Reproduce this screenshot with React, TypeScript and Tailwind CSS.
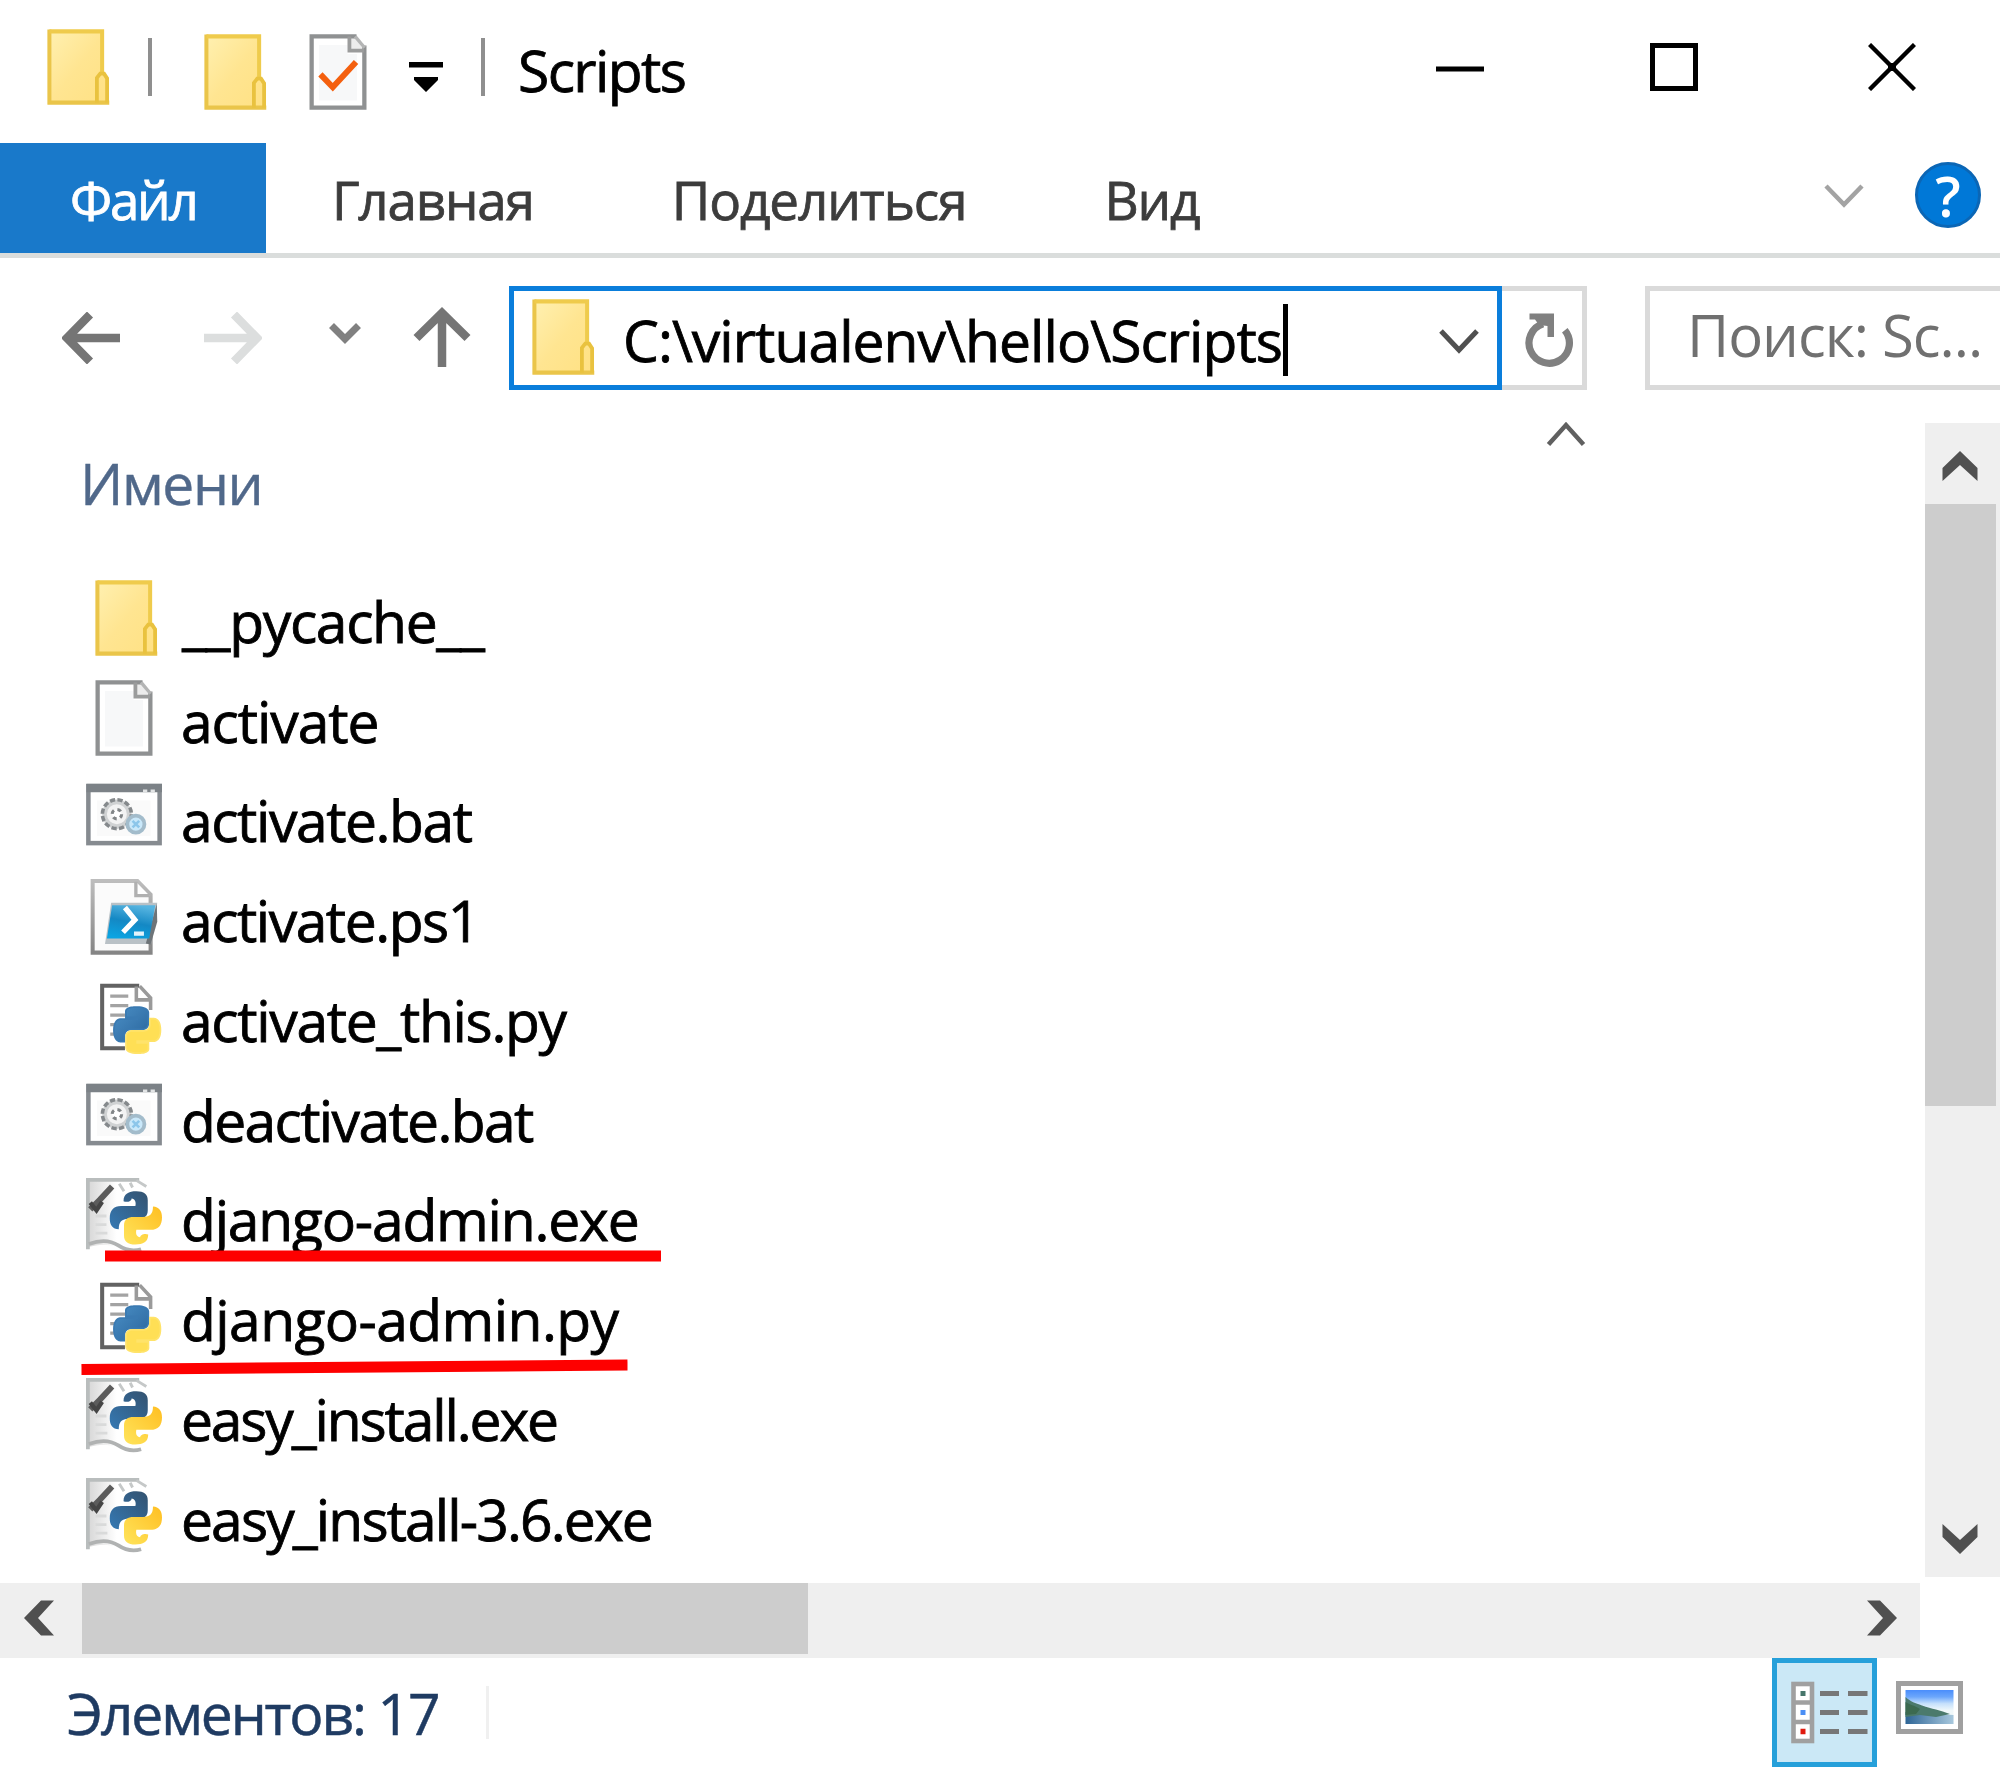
import type { ReactNode } from "react";

function FolderIcon() {
  return (
    <svg viewBox="0 0 16 16" className="size-[76px] shrink-0">
      <defs>
        <linearGradient id="folder" x1="0" y1="0" x2="1" y2="1">
          <stop offset="0" stopColor="#fff0b0" />
          <stop offset="0.5" stopColor="#ffe591" />
          <stop offset="1" stopColor="#ffe184" />
        </linearGradient>
      </defs>
      <path d="M2.4 0.5H13.5V9.3L14.5 10.4V15.5H2.4Z" fill="url(#folder)" />
      <path d="M2.4 0.1V15.9M2 15.5H15" stroke="#eac54a" strokeWidth="0.85" fill="none" />
      <path d="M2.4 0.5H13.5V9.3" stroke="#efcb4c" strokeWidth="0.85" fill="none" />
      <path d="M12.4 15.5V10.3L13.1 9.4H13.9L14.55 10.4V15.5" stroke="#e9c23f" strokeWidth="0.8" fill="none" />
    </svg>
  );
}

function PageIcon({ check = false }: { check?: boolean }) {
  return (
    <svg viewBox="0 0 16 16" className="size-[76px] shrink-0">
      <path d="M2.45 0.5H11.6L13.55 2.8V15.5H2.45Z" fill="#fff" />
      <path d="M4 2.3H10V4.2H12V14H4Z" fill="#f7f8f9" />
      <path d="M10.4 0.5V3.5H13.5L11.6 0.7Z" fill="#ececec" />
      <path d="M11.9 0.5H2.45V15.5H13.55V2.4" fill="none" stroke="#8f9192" strokeWidth="0.9" />
      <path d="M10.4 0.5V3.5H13.5" fill="none" stroke="#9b9c9c" strokeWidth="0.8" />
      <path d="M11.6 0.5L13.6 2.9" fill="none" stroke="#b4b5b5" strokeWidth="0.7" />
      {check && <path d="M4.3 8.5L6.9 11.2L11.8 5.9" fill="none" stroke="#f4600f" strokeWidth="1.25" />}
    </svg>
  );
}

function BatchIcon() {
  return (
    <svg viewBox="0 0 16 16" className="size-[76px] shrink-0">
      <rect x="0.5" y="1.5" width="15" height="12" fill="#fff" stroke="#868b90" strokeWidth="0.95" />
      <path d="M0.1 1.9H16" stroke="#7c8287" strokeWidth="1.8" />
      <path d="M12 2.5H12.9M13.6 2.5H14.5" stroke="#e2e4e5" strokeWidth="0.6" />
      <path d="M2.3 4.5H13.6V12H2.3Z" fill="#fafafa" />
      <circle cx="6.5" cy="7.4" r="2.6" fill="#f3f3f3" stroke="#d0d2d3" strokeWidth="1" />
      <circle cx="6.5" cy="7.4" r="3.05" fill="none" stroke="#85898c" strokeWidth="0.75" strokeDasharray="1.1 0.5" />
      <circle cx="6.5" cy="7.4" r="1" fill="#fff" stroke="#808486" strokeWidth="0.65" strokeDasharray="0.8 0.77" />
      <circle cx="10.5" cy="9.5" r="1.8" fill="#c9e8fa" stroke="#a3bccb" strokeWidth="0.8" />
      <path d="M9.8 10.2L11.2 8.8M9.8 8.8L11.2 10.2" stroke="#8cc6ea" strokeWidth="0.55" />
    </svg>
  );
}

function PowerShellIcon() {
  return (
    <svg viewBox="0 0 16 16" className="size-[76px] shrink-0">
      <defs>
        <linearGradient id="ps" x1="0.6" y1="0" x2="0.3" y2="1">
          <stop offset="0" stopColor="#56b4e0" />
          <stop offset="0.5" stopColor="#1488c4" />
          <stop offset="1" stopColor="#0ba4e2" />
        </linearGradient>
        <linearGradient id="psPage" x1="0" y1="0" x2="0" y2="1">
          <stop offset="0" stopColor="#bdbdbd" />
          <stop offset="1" stopColor="#858585" />
        </linearGradient>
      </defs>
      <path d="M1.4 0.4H10.8L13.6 3.3V15.5H1.4Z" fill="#fbfbfb" stroke="url(#psPage)" strokeWidth="0.85" />
      <path d="M10.5 0.6V3.5H13.4" fill="#fff" stroke="#b0b0b0" strokeWidth="0.7" />
      <path d="M5.3 5H15L13.7 13.7H4Z" fill="#b9c1c6" />
      <path d="M14.9 5.2L15 9L13.6 13.8L12.6 13.6Z" fill="#6e7478" />
      <path d="M5.5 5.5H14.6L13.3 12.5H4.4Z" fill="url(#ps)" />
      <path d="M8.2 6L10.3 8.6L7.8 11.2" fill="none" stroke="#fff" strokeWidth="1.1" />
      <path d="M10.1 11.5H12.2" stroke="#e2f3fb" strokeWidth="0.9" />
    </svg>
  );
}

function PythonFileIcon() {
  return (
    <svg viewBox="0 0 16 16" className="size-[76px] shrink-0">
      <defs>
        <linearGradient id="pyb" x1="0" y1="0" x2="1" y2="1">
          <stop offset="0" stopColor="#4a8fc6" />
          <stop offset="1" stopColor="#2a659c" />
        </linearGradient>
      </defs>
      <path d="M3.4 1.4H11L13.6 4.2V14.6H3.4Z" fill="#fff" />
      <path d="M8.2 14.6H3.4V1.4H11.2" fill="none" stroke="#626262" strokeWidth="0.85" />
      <path d="M10.6 1.6V4.4H13.4M11.3 1.5L13.6 4V6.5" fill="none" stroke="#9a9a9a" strokeWidth="0.75" />
      <path d="M5.1 3.6H8.9M5.1 5.6H8.9M5.1 7.6H8.5M5.1 9.6H7M5.1 11.6H6.5" stroke="#a3a3a3" strokeWidth="0.65" />
      <g transform="translate(5.9 5.9) scale(0.405)">
        <path
          fill="url(#pyb)"
          stroke="#3a7ab2"
          strokeWidth="0.9"
          d="M14.25.18l.9.2.73.26.59.3.45.32.34.34.25.34.16.33.1.3.04.26.02.2-.01.13V8.5l-.05.63-.13.55-.21.46-.26.38-.3.31-.33.25-.35.19-.35.14-.33.1-.3.07-.26.04-.21.02H8.77l-.69.05-.59.14-.5.22-.41.27-.33.32-.27.35-.2.36-.15.37-.1.35-.07.32-.04.27-.02.21v3.06H3.17l-.21-.03-.28-.07-.32-.12-.35-.18-.36-.26-.36-.36-.35-.46-.32-.59-.28-.73-.21-.88-.14-1.05-.05-1.23.06-1.22.16-1.04.24-.87.32-.71.36-.57.4-.44.42-.33.42-.24.4-.16.36-.1.32-.05.24-.01h.16l.06.01h8.16v-.83H6.18l-.01-2.75-.02-.37.05-.34.11-.31.17-.28.25-.26.31-.23.38-.2.44-.18.51-.15.58-.12.64-.1.71-.06.77-.04.84-.02 1.27.05z"
        />
        <path
          fill="#ffdf55"
          stroke="#ffe36a"
          strokeWidth="0.9"
          d="M21.1 6.11l.28.06.32.12.35.18.36.27.36.35.35.47.32.59.28.73.21.88.14 1.04.05 1.23-.06 1.23-.16 1.04-.24.86-.32.71-.36.57-.4.45-.42.33-.42.24-.4.16-.36.09-.32.05-.24.02-.16-.01h-8.22v.82h5.84l.01 2.76.02.36-.05.34-.11.31-.17.29-.25.25-.31.24-.38.2-.44.17-.51.15-.58.13-.64.09-.71.07-.77.04-.84.01-1.27-.04-1.07-.14-.9-.2-.73-.25-.59-.3-.45-.33-.34-.34-.25-.34-.16-.33-.1-.3-.04-.25-.02-.2.01-.13v-5.34l.05-.64.13-.54.21-.46.26-.38.3-.32.33-.24.35-.2.35-.14.33-.1.3-.06.26-.04.21-.02.13-.01h5.84l.69-.05.59-.14.5-.21.41-.28.33-.32.27-.35.2-.36.15-.36.1-.35.07-.32.04-.28.02-.21V6.07h2.09l.14.01z"
        />
      </g>
    </svg>
  );
}

const snake =
  "M7.9 4.9C7.9 3.3 9 2.8 10.6 2.8C12.2 2.8 13 3.4 13 4.7V6.8C13 8.1 12.2 8.6 11 8.6H9C7.5 8.6 6.9 9.3 6.9 10.8C5.6 10.7 5 9.9 5 8.5C5 6.8 5.8 5.9 7.4 5.9H10.4C10.6 5 10.3 4.4 9.6 4.3C9.6 4.9 8.6 5.2 7.9 4.9Z";

function PythonExeIcon() {
  return (
    <svg viewBox="0 0 16 16" className="size-[76px] shrink-0">
      <defs>
        <linearGradient id="exb" x1="0" y1="1" x2="1" y2="0">
          <stop offset="0" stopColor="#3579b4" />
          <stop offset="1" stopColor="#33526f" />
        </linearGradient>
        <linearGradient id="exPaper" x1="0" y1="0" x2="1" y2="0">
          <stop offset="0" stopColor="#d6d6d6" />
          <stop offset="0.5" stopColor="#ffffff" />
        </linearGradient>
        <linearGradient id="exYellow" x1="1" y1="0" x2="0" y2="1">
          <stop offset="0" stopColor="#ffe45c" />
          <stop offset="1" stopColor="#ffbf22" />
        </linearGradient>
      </defs>
      <path d="M0.3 0.3H11L12.6 2V14H10.2C8 16 6 13 0.3 14.6Z" fill="url(#exPaper)" />
      <path d="M0.4 15V0.4H11.2" fill="none" stroke="#b9bdbd" strokeWidth="0.8" />
      <path d="M10.6 0.5L12.7 1.8M7 1.2L8 2.8M9.3 1L9.8 2" fill="none" stroke="#c5c8c8" strokeWidth="0.6" />
      <path d="M0.6 13.9C3 13 5 13 6.8 14.2C8 15 9.6 15.6 11.6 15" fill="none" stroke="#b0b2b2" strokeWidth="0.8" />
      <path d="M2 8H4.3M2 9.8H4.3M2 11.6H4.5" stroke="#d9dada" strokeWidth="0.6" />
      <path d="M0.9 6.6L2.9 4.6L5.5 1.8" fill="none" stroke="#5c5c5c" strokeWidth="1.25" />
      <path d="M0.9 5.2L2.2 6.8L3.4 5" fill="none" stroke="#454545" strokeWidth="0.9" />
      <path d={snake} fill="url(#exb)" />
      <path d={snake} fill="url(#exYellow)" transform="rotate(180 10.5 8.4)" />
    </svg>
  );
}

type Row = { name: string; icon: ReactNode; text: string };

const rows: Row[] = [
  { name: "__pycache__", icon: <FolderIcon />, text: "ml-[20px] tracking-[-1.36px]" },
  { name: "activate", icon: <PageIcon />, text: "ml-[19px] tracking-[-1.1px]" },
  { name: "activate.bat", icon: <BatchIcon />, text: "ml-[19px] tracking-[-1.45px]" },
  { name: "activate.ps1", icon: <PowerShellIcon />, text: "ml-[19px] tracking-[-1.5px]" },
  { name: "activate_this.py", icon: <PythonFileIcon />, text: "ml-[19px] tracking-[-1.35px]" },
  { name: "deactivate.bat", icon: <BatchIcon />, text: "ml-[19px] tracking-[-1.66px]" },
  { name: "django-admin.exe", icon: <PythonExeIcon />, text: "ml-[19px] tracking-[-1.22px]" },
  { name: "django-admin.py", icon: <PythonFileIcon />, text: "ml-[19px] tracking-[-0.6px]" },
  { name: "easy_install.exe", icon: <PythonExeIcon />, text: "ml-[19px] tracking-[-2.16px]" },
  { name: "easy_install-3.6.exe", icon: <PythonExeIcon />, text: "ml-[19px] tracking-[-1.9px]" },
];

function TitleBar() {
  return (
    <header className="flex h-[143px] items-start">
      <div className="ml-[38px] mt-[29px]"><FolderIcon /></div>
      <div className="ml-[34px] mt-[38px] h-[58px] w-1 bg-[#8f8f8f]" />
      <div className="ml-[43px] mt-[34px]"><FolderIcon /></div>
      <div className="ml-[29px] mt-[34px]"><PageIcon check /></div>
      <svg viewBox="0 0 34 30" className="ml-[33px] mt-[62px] h-[30px] w-[34px]">
        <path d="M0 0H34V5.5H0ZM5 15H29V18L17 30L5 18Z" />
      </svg>
      <div className="ml-[38px] mt-[38px] h-[58px] w-1 bg-[#8f8f8f]" />
      <span className="ml-[33px] mt-[41px] tracking-[-1.6px] [-webkit-text-stroke:0.8px]">Scripts</span>
      <div className="ml-auto mr-[84px] flex">
        <svg viewBox="0 0 48 48" className="mt-[43px] size-12">
          <path d="M0 26H48" stroke="#000" strokeWidth="5" />
        </svg>
        <svg viewBox="0 0 48 48" className="ml-[166px] mt-[43px] size-12">
          <rect x="2.5" y="2.5" width="43" height="43" fill="none" stroke="#000" strokeWidth="5" />
        </svg>
        <svg viewBox="0 0 48 48" className="ml-[170px] mt-[43px] size-12">
          <path d="M1.5 1.5L46.5 46.5M46.5 1.5L1.5 46.5" stroke="#000" strokeWidth="4.4" />
          <rect x="20" y="20" width="8" height="8" />
        </svg>
      </div>
    </header>
  );
}

function Ribbon() {
  return (
    <nav className="flex h-[115px] items-start border-b-[5px] border-[#dadddc] text-[53px] leading-[54px] text-[#3c3c3c] [-webkit-text-stroke:0.8px]">
      <div className="flex h-[110px] w-[266px] shrink-0 items-center bg-[#1979ca] pl-[70px] pt-[3px] tracking-[-2.3px] text-white">Файл</div>
      <span className="ml-[66px] mt-[30px] tracking-[-1.2px]">Главная</span>
      <span className="ml-[138px] mt-[30px] tracking-[-1.1px]">Поделиться</span>
      <span className="ml-[138px] mt-[30px] tracking-[-1.2px]">Вид</span>
      <div className="ml-auto mr-[19px] flex items-start">
        <svg viewBox="0 0 40 24" className="mt-[41px] h-[24px] w-[40px]">
          <path d="M2 2L20 20.5L38 2" fill="none" stroke="#a3a3a3" strokeWidth="4.5" />
        </svg>
        <div className="ml-[51px] mt-[19px] flex size-[66px] items-center justify-center rounded-full border-[3px] border-[#0b66b5] bg-[#0078d7] text-[56px] font-semibold text-white [-webkit-text-stroke:0]">
          ?
        </div>
      </div>
    </nav>
  );
}

function AddressRow() {
  return (
    <div className="flex h-[132px] items-start pt-[28px]">
      <svg viewBox="0 0 58 52" className="ml-[62px] mt-[26px] h-[52px] w-[58px]">
        <path d="M58 26H6M28 2.5L5 26L28 49.5" fill="none" stroke="#757575" strokeWidth="8.5" />
      </svg>
      <svg viewBox="0 0 58 52" className="ml-[84px] mt-[26px] h-[52px] w-[58px]">
        <path d="M0 26H52M30 2.5L53 26L30 49.5" fill="none" stroke="#dcdede" strokeWidth="8.5" />
      </svg>
      <svg viewBox="0 0 32 22" className="ml-[67px] mt-[37px] h-[22px] w-[32px]">
        <path d="M2.5 2.5L16 16L29.5 2.5" fill="none" stroke="#808080" strokeWidth="7" />
      </svg>
      <svg viewBox="0 0 58 60" className="ml-[52px] mt-[21px] h-[60px] w-[58px]">
        <path d="M29 60V6M3.5 31L29 6L54.5 31" fill="none" stroke="#757575" strokeWidth="8.5" />
      </svg>
      <div className="ml-[38px] flex h-[104px] w-[993px] items-start border-[5px] border-[#0a7edb] bg-white">
        <div className="ml-[9px] mt-[8px]"><FolderIcon /></div>
        <span className="ml-[24px] mt-[20px] tracking-[-0.97px] [-webkit-text-stroke:0.8px]">C:\virtualenv\hello\Scripts</span>
        <div className="ml-px mt-[13px] h-[72px] w-[5px] shrink-0 bg-black" />
        <svg viewBox="0 0 40 25" className="ml-auto mr-[18px] mt-[38px] h-[25px] w-[40px]">
          <path d="M2 2L20 21L38 2" fill="none" stroke="#505050" strokeWidth="5" />
        </svg>
      </div>
      <div className="flex h-[104px] w-[85px] items-start border-y-[5px] border-r-[5px] border-[#dadada]">
        <svg viewBox="0 0 50 54" className="ml-[23px] mt-[22px] h-[54px] w-[50px]">
          <path d="M39.8 17.2A20.2 20.2 0 1 1 18 10.8" fill="none" stroke="#808080" strokeWidth="7.2" />
          <path d="M4.5 0.5H29V24H22.5V13L14 12L10 6.5H4.5Z" fill="#808080" />
        </svg>
      </div>
      <div className="ml-[58px] h-[104px] flex-1 border-y-[5px] border-l-[5px] border-[#dadada] pl-[37px] pt-[15px] text-[58px] tracking-[-1px] whitespace-nowrap text-[#707070]">
        Поиск: Sc...
      </div>
    </div>
  );
}

function FileList() {
  return (
    <main className="flex h-[1193px]">
      <div className="relative flex-1">
        <div className="flex h-[178px] items-start">
          <span className="ml-[80px] mt-[64px] tracking-[-1.4px] text-[#50688a] [-webkit-text-stroke:0.4px]">Имени</span>
          <svg viewBox="0 0 40 26" className="ml-auto mr-[339px] mt-[31px] h-[26px] w-[40px]">
            <path d="M2.5 23.5L20 4L37.5 23.5" fill="none" stroke="#606060" strokeWidth="4.5" />
          </svg>
        </div>
        <ul>
          {rows.map((row) => (
            <li key={row.name} className="flex h-[99.77px] items-center pl-[86px]">
              {row.icon}
              <span className={`mt-[6px] [-webkit-text-stroke:0.8px] ${row.text}`}>{row.name}</span>
            </li>
          ))}
        </ul>
        <svg viewBox="0 0 600 140" className="absolute left-[70px] top-[849px] h-[140px] w-[600px]">
          <path d="M35 17H591" stroke="#fe0000" strokeWidth="11" />
          <path d="M11.5 130.5L557.5 126" stroke="#fe0000" strokeWidth="11" />
        </svg>
      </div>
      <div className="mt-[33px] flex h-[1154px] w-[75px] flex-col items-start bg-[#efefef]">
        <svg viewBox="0 0 36 30" className="ml-[17px] mt-[28px] h-[30px] w-[36px]">
          <path d="M0.5 30V17L18 0L35.5 17V30L18 14Z" fill="#505050" />
        </svg>
        <div className="mt-[23px] h-[602px] w-[71px] bg-[#cdcdcd]" />
        <svg viewBox="0 0 36 30" className="mb-[23px] ml-[17px] mt-auto h-[30px] w-[36px]">
          <path d="M0.5 0V13L18 30L35.5 13V0L18 16Z" fill="#505050" />
        </svg>
      </div>
    </main>
  );
}

function BottomScrollbar() {
  return (
    <div className="flex h-[75px] w-[1920px] items-start bg-[#efefef]">
      <svg viewBox="0 0 30 36" className="ml-[24px] mt-[17px] h-[36px] w-[30px]">
        <path d="M30 0.5H17L0 18L17 35.5H30L14 18Z" fill="#505050" />
      </svg>
      <div className="ml-[28px] h-[71px] w-[726px] bg-[#cdcdcd]" />
      <svg viewBox="0 0 30 36" className="ml-auto mr-[23px] mt-[17px] h-[36px] w-[30px]">
        <path d="M0 0.5H13L30 18L13 35.5H0L16 18Z" fill="#505050" />
      </svg>
    </div>
  );
}

function StatusBar() {
  return (
    <footer className="flex h-[109px] items-start">
      <span className="ml-[67px] mt-[26px] w-[417px] shrink-0 tracking-[-2.14px] text-[#1f3b62] [-webkit-text-stroke:0.5px]">Элементов: 17</span>
      <div className="ml-[2px] mt-[28px] h-[53px] w-[3px] bg-[#f0f0f0]" />
      <div className="ml-auto mr-[37px] flex items-start">
        <div className="h-[109px] w-[105px] border-[5px] border-[#26a0da] bg-[#cbe8f6]">
          <svg viewBox="0 0 80 66" className="ml-[14px] mt-[18px] h-[66px] w-[80px]">
            <rect x="2.5" y="3" width="18.5" height="57" fill="#fff" stroke="#a0a0a0" strokeWidth="4.6" />
            <path d="M1 21.5H22M1 41H22" stroke="#a0a0a0" strokeWidth="4.6" />
            <path d="M9.5 12.5H14.5" stroke="#47766b" strokeWidth="5" />
            <path d="M9.5 31.5H14.5" stroke="#4b8ff5" strokeWidth="5" />
            <path d="M9.5 50.5H14.5" stroke="#e01a0e" strokeWidth="5.5" />
            <path d="M29 12.5H48M57 12.5H76.5M29 31.5H48M57 31.5H76.5M29 50.5H48M57 50.5H76.5" stroke="#777" strokeWidth="5" />
          </svg>
        </div>
        <svg viewBox="0 0 67 53" className="ml-[19px] mt-[23px] h-[53px] w-[67px]">
          <defs>
            <linearGradient id="sky" x1="0" y1="0" x2="0" y2="1">
              <stop offset="0" stopColor="#4a8dfb" />
              <stop offset="0.2" stopColor="#6ba6fb" />
              <stop offset="0.4" stopColor="#c5e0fc" />
              <stop offset="0.6" stopColor="#f0f8fa" />
            </linearGradient>
            <linearGradient id="sea" x1="0" y1="0" x2="1" y2="0">
              <stop offset="0" stopColor="#2e6596" />
              <stop offset="1" stopColor="#a8c8dd" />
            </linearGradient>
          </defs>
          <rect x="2.5" y="2.5" width="62" height="48" fill="#fff" stroke="#a0a0a0" strokeWidth="5" />
          <rect x="9.5" y="9" width="48" height="34" fill="url(#sky)" />
          <path d="M9.5 31L57.5 34V43H9.5Z" fill="url(#sea)" />
          <path d="M9.5 16C15 21 19 22 26 24.5C36 28 44 29 54 33L40 36L24 34L9.5 36Z" fill="#4b7a6c" />
          <path d="M9.5 21C14 24 18 24 24 28L20 33L9.5 34Z" fill="#3c6a50" />
        </svg>
      </div>
    </footer>
  );
}

export default function App() {
  return (
    <div className="h-[1767px] w-[2000px] overflow-hidden bg-white font-['Open_Sans','Noto_Sans',sans-serif] text-[57px] leading-[58px] text-black">
      <TitleBar />
      <Ribbon />
      <AddressRow />
      <FileList />
      <BottomScrollbar />
      <StatusBar />
    </div>
  );
}
